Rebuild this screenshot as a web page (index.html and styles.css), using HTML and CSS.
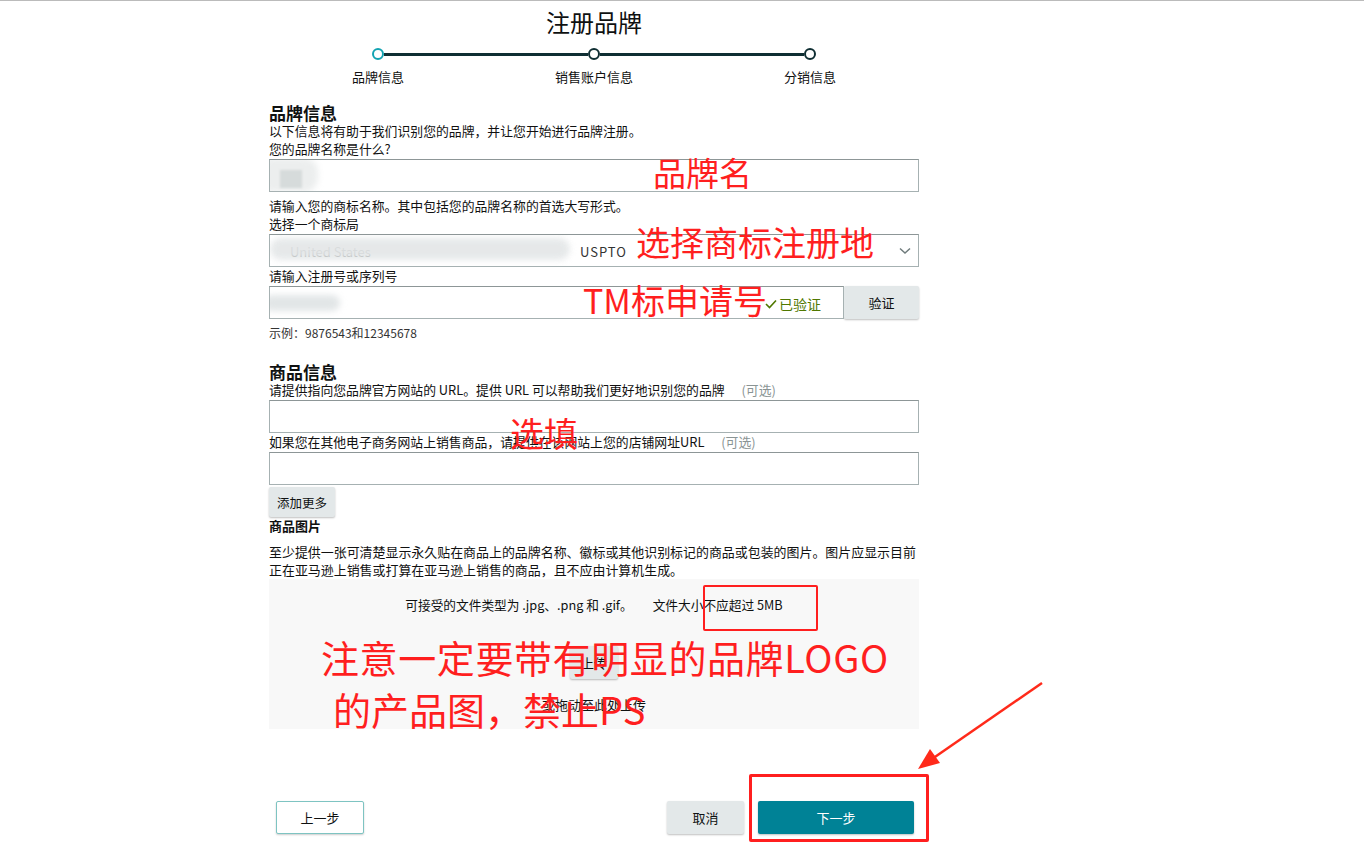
FILE: index.html
```html
<!DOCTYPE html>
<html>
<head>
    <title>注册品牌</title>
    <link rel="stylesheet" href="styles.css">
</head>
<body>
    <div class="page">
        <div class="column">
            <h1 class="title">注册品牌</h1>

            <div class="stepper">
                <div class="step-track">
                    <span class="dot active"></span>
                    <span class="bar"></span>
                    <span class="dot"></span>
                    <span class="bar"></span>
                    <span class="dot"></span>
                </div>
                <div class="step-labels">
                    <span>品牌信息</span>
                    <span>销售账户信息</span>
                    <span>分销信息</span>
                </div>
            </div>

            <h2 class="section-title">品牌信息</h2>
            <p class="line">以下信息将有助于我们识别您的品牌，并让您开始进行品牌注册。</p>
            <p class="line">您的品牌名称是什么?</p>
            <div class="field">
                <span class="blob blob-name"></span>
                <span class="blob blob-name-sq"></span>
            </div>
            <p class="line hint">请输入您的商标名称。其中包括您的品牌名称的首选大写形式。</p>
            <p class="line">选择一个商标局</p>
            <div class="field select">
                <span class="select-text">United States</span>
                <span class="select-tail">USPTO</span>
                <span class="blob blob-select"></span>
                <svg class="chevron" width="12" height="8" viewBox="0 0 12 8"><path d="M1 1.5 L6 6 L11 1.5" fill="none" stroke="#6f7b7c" stroke-width="1.5"/></svg>
            </div>
            <p class="line">请输入注册号或序列号</p>
            <div class="field-row">
                <div class="field grow">
                    <span class="blob blob-reg"></span>
                    <span class="verified">
                        <svg width="12" height="10" viewBox="0 0 12 10"><path d="M1 5 L4.5 8.5 L11 1.5" fill="none" stroke="#507800" stroke-width="1.6"/></svg>
                        已验证
                    </span>
                </div>
                <button class="btn-gray verify">验证</button>
            </div>
            <p class="example">示例：9876543和12345678</p>

            <h2 class="section-title second">商品信息</h2>
            <p class="line">请提供指向您品牌官方网站的 URL。提供 URL 可以帮助我们更好地识别您的品牌 <span class="optional">(可选)</span></p>
            <div class="field"></div>
            <p class="line">如果您在其他电子商务网站上销售商品，请提供在该网站上您的店铺网址URL <span class="optional">(可选)</span></p>
            <div class="field"></div>
            <button class="btn-gray add-more">添加更多</button>

            <h3 class="sub-title">商品图片</h3>
            <p class="para">至少提供一张可清楚显示永久贴在商品上的品牌名称、徽标或其他识别标记的商品或包装的图片。图片应显示目前正在亚马逊上销售或打算在亚马逊上销售的商品，且不应由计算机生成。</p>
            <div class="upload">
                <p class="upload-note"><span>可接受的文件类型为 .jpg、.png 和 .gif。</span><span>文件大小不应超过 5MB</span></p>
                <button class="btn-gray upload-btn">上传</button>
                <p class="drop-note">或拖动至此处上传</p>
            </div>

            <div class="footer">
                <button class="btn-outline">上一步</button>
                <div class="footer-right">
                    <button class="btn-gray cancel">取消</button>
                    <button class="btn-primary">下一步</button>
                </div>
            </div>
        </div>

        <!-- annotations drawn over the screenshot -->
        <div class="note note-name">品牌名</div>
        <div class="note note-office">选择商标注册地</div>
        <div class="note note-tm">TM标申请号</div>
        <div class="note note-optional">选填</div>
        <div class="note note-logo">注意一定要带有明显的品牌LOGO</div>
        <div class="note note-ps">的产品图，禁止PS</div>
        <div class="red-box box-size"></div>
        <div class="red-box box-next"></div>
        <svg class="arrow" width="140" height="100" viewBox="0 0 140 100">
            <path d="M132 4 L22 80" stroke="#ff2a1a" stroke-width="2.5" fill="none"/>
            <path d="M8 90 L20 70 L30 84 Z" fill="#ff2a1a"/>
        </svg>
    </div>
</body>
</html>
```

FILE: styles.css
```css
body {
    margin: 0;
    font-family: "Noto Sans CJK SC", "Noto Sans", sans-serif;
    color: #0f1111;
    background: white;
    border-top: 1px solid #bbbbbb;
}

.page {
    position: relative;
    width: 1364px;
    min-height: 863px;
}

.column {
    margin-left: 269px;
    width: 650px;
    padding-top: 5px;
}

.title {
    margin: 0;
    text-align: center;
    font-size: 24px;
    font-weight: normal;
    line-height: 32px;
    color: #0f1111;
}

/* Stepper */
.stepper {
    width: 540px;
    margin: 10px auto 0;
}

.step-track {
    display: flex;
    align-items: center;
    padding: 0 48px;
}

.dot {
    width: 8px;
    height: 8px;
    border: 2px solid #0f2e33;
    border-radius: 50%;
    background: white;
    flex: none;
}

.dot.active {
    border-color: #13a3b2;
}

.bar {
    flex: 1;
    height: 3px;
    background: #0f2e33;
}

.step-labels {
    display: flex;
    justify-content: space-between;
    font-size: 13px;
    line-height: 16px;
    margin-top: 9px;
    color: #111;
}

.step-labels span {
    width: 108px;
    text-align: center;
    white-space: nowrap;
}

/* Form text */
.section-title {
    margin: 19px 0 0;
    font-size: 17px;
    line-height: 18px;
    font-weight: bold;
    color: #0f1111;
}

.section-title.second {
    margin-top: 21px;
}

.line {
    margin: 0;
    font-size: 12.85px;
    line-height: 18px;
    color: #111;
}

.hint {
    margin-top: 5px;
}

.optional {
    color: #8a9494;
    margin-left: 14px;
}

.example {
    margin: 5px 0 0;
    font-size: 12px;
    line-height: 18px;
    color: #333;
}

/* Inputs */
.field {
    position: relative;
    height: 33px;
    box-sizing: border-box;
    border: 1px solid #a6b1b2;
    border-top-color: #8d9697;
    margin-top: 1px;
    background: white;
    overflow: hidden;
}

.field-row {
    display: flex;
    margin-top: 1px;
}

.field-row .field {
    margin-top: 0;
}

.grow {
    flex: 1;
}

.select-text {
    position: absolute;
    left: 20px;
    top: 7px;
    font-size: 13px;
    color: #555;
    white-space: nowrap;
}

.select-tail {
    position: absolute;
    left: 310px;
    top: 7px;
    font-size: 13px;
    color: #333;
    letter-spacing: 1px;
}

.chevron {
    position: absolute;
    right: 7px;
    top: 12px;
}

.blob {
    position: absolute;
    background: #e2e6e7;
    filter: blur(3px);
    border-radius: 14px;
}

.blob-name {
    left: -14px;
    top: -2px;
    width: 62px;
    height: 34px;
    background: #eceeee;
}

.blob-name-sq {
    left: 10px;
    top: 10px;
    width: 22px;
    height: 18px;
    background: #d6dbdb;
    border-radius: 0;
    filter: blur(1px);
}

.blob-select {
    left: 0;
    top: 3px;
    width: 300px;
    height: 22px;
    background: #e4e7e8;
    opacity: 0.92;
}

.blob-reg {
    left: -6px;
    top: 8px;
    width: 76px;
    height: 16px;
}

.verified {
    position: absolute;
    right: 22px;
    top: 7px;
    font-size: 14px;
    color: #507800;
    display: flex;
    align-items: center;
    gap: 2px;
}

/* Buttons */
button {
    font-family: inherit;
    cursor: pointer;
}

.btn-gray {
    background: #e3e8e9;
    border: none;
    border-radius: 2px;
    box-shadow: 0 1px 2px rgba(0,0,0,0.25);
    color: #0f1111;
    font-size: 13px;
}

.verify {
    width: 75px;
    height: 33px;
}

.add-more {
    margin-top: 2px;
    height: 30px;
    width: 66px;
    font-size: 12.5px;
    padding: 0;
}

.sub-title {
    margin: 0;
    font-size: 13px;
    line-height: 18px;
    font-weight: bold;
}

.para {
    margin: 8px 0 0;
    font-size: 12.95px;
    line-height: 18px;
    color: #111;
}

/* Upload */
.upload {
    background: #f8f8f8;
    height: 150px;
    display: flex;
    flex-direction: column;
    align-items: center;
}

.upload-note {
    margin: 18px 0 0;
    font-size: 12.7px;
    line-height: 16px;
    display: flex;
    gap: 20px;
}

.upload-btn {
    margin-top: 33px;
    width: 48px;
    height: 33px;
    font-size: 13px;
}

.drop-note {
    margin: 18px 0 0;
    font-size: 13px;
    line-height: 16px;
}

/* Footer */
.footer {
    display: flex;
    justify-content: space-between;
    margin-top: 72px;
    padding: 0 5px 0 7px;
}

.footer-right {
    display: flex;
    gap: 14px;
}

.btn-outline {
    width: 88px;
    height: 33px;
    background: white;
    border: 1px solid #7ec4c2;
    border-radius: 2px;
    box-shadow: 0 1px 2px rgba(0,0,0,0.2);
    font-size: 13px;
    color: #0f1111;
}

.cancel {
    width: 77px;
    height: 33px;
}

.btn-primary {
    width: 156px;
    height: 33px;
    background: #008296;
    color: white;
    border: none;
    border-radius: 2px;
    box-shadow: 0 1px 2px rgba(0,0,0,0.25);
    font-size: 13px;
}

/* Red annotations */
.note {
    position: absolute;
    color: #ff1f1f;
    font-family: "Noto Sans CJK SC", sans-serif;
    white-space: nowrap;
    line-height: 1;
}

.note-name {
    left: 653px;
    top: 155px;
    font-size: 33px;
}

.note-office {
    left: 636px;
    top: 224px;
    font-size: 34px;
}

.note-tm {
    left: 583px;
    top: 282px;
    font-size: 34px;
}

.note-optional {
    left: 510px;
    top: 415px;
    font-size: 34px;
}

.note-logo {
    left: 321px;
    top: 637px;
    font-size: 38px;
    letter-spacing: 0.6px;
}

.note-ps {
    left: 333px;
    top: 689px;
    font-size: 38px;
}

.red-box {
    position: absolute;
    border: 2px solid #ff1f1f;
    border-radius: 2px;
}

.box-size {
    left: 703px;
    top: 584px;
    width: 111px;
    height: 42px;
}

.box-next {
    left: 749px;
    top: 773px;
    width: 174px;
    height: 62px;
    border-width: 3px;
}

.arrow {
    position: absolute;
    left: 910px;
    top: 678px;
}
```
